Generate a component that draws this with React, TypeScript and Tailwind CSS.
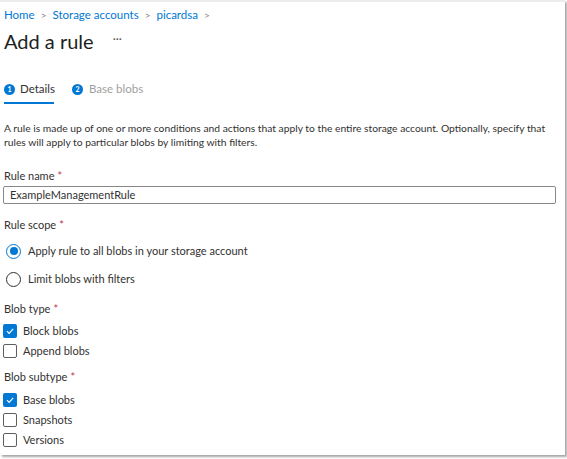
import React from "react";

const font = { fontFamily: 'Lato, "Noto Sans", Arial, sans-serif' };

function Req() {
  return <span className="text-[#c4314b] ml-[3px]">*</span>;
}

function Radio({ checked, label }: { checked?: boolean; label: string }) {
  return (
    <div className="flex items-center h-[16px]">
      <span
        className={
          "ml-[6px] w-[15px] h-[15px] rounded-full border flex items-center justify-center " +
          (checked ? "border-[#0078d4]" : "border-[#323130]")
        }
      >
        {checked && <span className="w-[8px] h-[8px] rounded-full bg-[#0078d4]" />}
      </span>
      <span className="ml-[7px] text-[11px] leading-[14px] text-[#323130]">{label}</span>
    </div>
  );
}

function Check({ checked, label }: { checked?: boolean; label: string }) {
  return (
    <div className="flex items-center h-[14px]">
      <span
        className={
          "ml-[3px] w-[14px] h-[14px] rounded-[2px] flex items-center justify-center " +
          (checked ? "bg-[#0078d4]" : "border border-[#605e5c]")
        }
      >
        {checked && (
          <svg width="10" height="10" viewBox="0 0 10 10" fill="none">
            <path d="M2 5.2 L4.1 7.3 L8.2 2.8" stroke="white" strokeWidth="1.2" />
          </svg>
        )}
      </span>
      <span className="ml-[6px] text-[11px] leading-[14px] text-[#323130]">{label}</span>
    </div>
  );
}

export default function App() {
  return (
    <div className="w-[567px] h-[459px] bg-white overflow-hidden" style={font}>
      <div className="w-[565px] h-[455px] bg-white border-t-[2px] border-t-[#ececec] shadow-[2px_2px_2px_rgba(0,0,0,0.35)] flex flex-col">
        <div className="mt-[5px] ml-[4px] flex items-center text-[11.5px] leading-[16px] text-[#0078d4] h-[16px]">
          <span>Home</span>
          <span className="mx-[6px] text-[#8a8886] text-[10px]">&gt;</span>
          <span>Storage accounts</span>
          <span className="mx-[6px] text-[#8a8886] text-[10px]">&gt;</span>
          <span>picardsa</span>
          <span className="mx-[6px] text-[#8a8886] text-[10px]">&gt;</span>
        </div>
        <div className="mt-[5px] ml-[4px] flex items-center h-[26px]">
          <span className="text-[20px] text-[#201f1e] leading-none">Add a rule</span>
          <span className="ml-[19px] text-[12px] text-[#605e5c] -mt-[4px]">···</span>
        </div>
        <div className="mt-[27px] ml-[4px] flex items-start">
          <div className="flex flex-col">
            <div className="flex items-center h-[16px]">
              <span className="w-[11px] h-[11px] rounded-full bg-[#0078d4] text-white text-[7px] font-bold flex items-center justify-center">1</span>
              <span className="ml-[5px] text-[11.5px] text-[#323130]">Details</span>
            </div>
            <div className="mt-[5px] h-[2px] w-[50px] bg-[#0078d4]" />
          </div>
          <div className="ml-[17px] flex items-center h-[16px]">
            <span className="w-[11px] h-[11px] rounded-full bg-[#0078d4] text-white text-[7px] font-bold flex items-center justify-center">2</span>
            <span className="ml-[6px] text-[11.5px] text-[#a19f9d]">Base blobs</span>
          </div>
        </div>
        <p className="mt-[17px] ml-[4px] text-[10.3px] leading-[14px] text-[#323130]">
          A rule is made up of one or more conditions and actions that apply to the entire storage account. Optionally, specify that rules will apply to particular blobs by limiting with filters.
        </p>
        <div className="mt-[20px] ml-[4px] text-[11px] text-[#323130] h-[14px] leading-[14px]">
          Rule name<Req />
        </div>
        <div className="mt-[3px] ml-[3px] w-[553px] h-[18px] border border-[#8a8886] rounded-[2px] flex items-center pl-[6px] text-[11px] text-[#323130]">
          ExampleManagementRule
        </div>
        <div className="mt-[14px] ml-[4px] text-[11px] text-[#323130] h-[14px] leading-[14px]">
          Rule scope<Req />
        </div>
        <div className="mt-[11px]">
          <Radio checked label="Apply rule to all blobs in your storage account" />
        </div>
        <div className="mt-[12px]">
          <Radio label="Limit blobs with filters" />
        </div>
        <div className="mt-[15px] ml-[4px] text-[11px] text-[#323130] h-[14px] leading-[14px]">
          Blob type<Req />
        </div>
        <div className="mt-[8px]">
          <Check checked label="Block blobs" />
        </div>
        <div className="mt-[6px]">
          <Check label="Append blobs" />
        </div>
        <div className="mt-[12px] ml-[4px] text-[11px] text-[#323130] h-[14px] leading-[14px]">
          Blob subtype<Req />
        </div>
        <div className="mt-[9px]">
          <Check checked label="Base blobs" />
        </div>
        <div className="mt-[6px]">
          <Check label="Snapshots" />
        </div>
        <div className="mt-[6px]">
          <Check label="Versions" />
        </div>
      </div>
    </div>
  );
}
